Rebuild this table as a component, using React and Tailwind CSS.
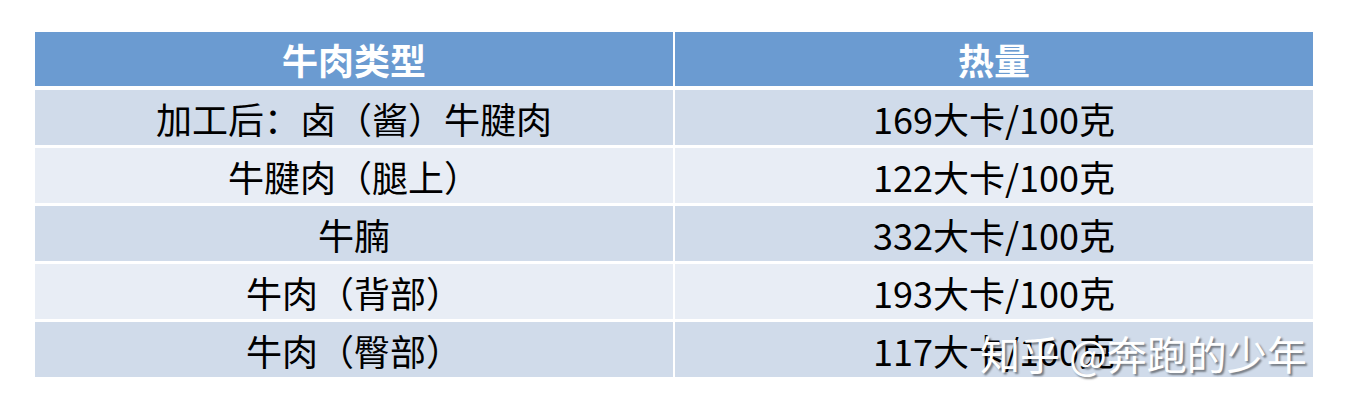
import React from "react";

const rows = [
  { name: "加工后：卤（酱）牛腱肉", kcal: "169大卡/100克" },
  { name: "牛腱肉（腿上）", kcal: "122大卡/100克" },
  { name: "牛腩", kcal: "332大卡/100克" },
  { name: "牛肉（背部）", kcal: "193大卡/100克" },
  { name: "牛肉（臀部）", kcal: "117大卡/100克" },
];

function App() {
  return (
    <div className="relative w-[1346px] h-[410px] bg-white pl-[35px] pt-[32px] font-['Noto_Sans_CJK_SC',sans-serif]">
      <div className="w-[1278px] flex flex-col gap-[3px]">
        {/* header */}
        <div className="grid grid-cols-2 gap-x-[2px] h-[54px] mb-[1px]">
          <div className="bg-[#6b9bd1] flex items-center justify-center text-white font-bold text-[36px] leading-none">
            牛肉类型
          </div>
          <div className="bg-[#6b9bd1] flex items-center justify-center text-white font-bold text-[36px] leading-none">
            热量
          </div>
        </div>

        {rows.map((row, index) => {
          const bg = index % 2 === 0 ? "bg-[#d0dbea]" : "bg-[#e8edf5]";
          return (
            <div key={index} className="grid grid-cols-2 gap-x-[2px] h-[55px]">
              <div className={`${bg} flex items-center justify-center text-black text-[36px] leading-none`}>
                {row.name}
              </div>
              <div className={`${bg} flex items-center justify-center text-black text-[36px] leading-none`}>
                {row.kcal}
              </div>
            </div>
          );
        })}
      </div>

      {/* watermark */}
      <div className="absolute left-[980px] top-[333px] text-white text-[40px] leading-none whitespace-nowrap [text-shadow:2px_2px_2px_rgba(0,0,0,0.45)]">
        知乎 @奔跑的少年
      </div>
    </div>
  );
}

export default App;
